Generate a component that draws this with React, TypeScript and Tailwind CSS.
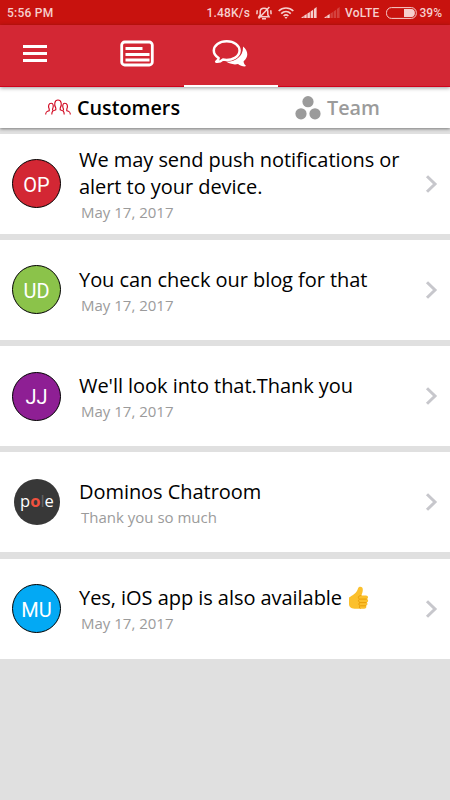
import { ReactNode } from 'react';
import clsx from 'clsx';

type Chat = {
  id: number;
  initials?: string;
  color: string;
  title: ReactNode;
  subtitle: string;
};

const ThumbsUp = () => (
  <svg className="inline-block h-[24px] w-[21px] -mt-[4px] ml-px" viewBox="0 0 21 24" aria-label="thumbs up">
    <path
      d="M1 11.5 C4.5 9.5 8.5 7.5 10 2.6 C10.4 0.2 14.6 0 14.8 3.2 C15 5.6 13.8 7.8 13.4 9.6 H18 C20.6 9.8 20.5 12.6 18.9 13.1 C20.8 13.8 20.4 16.2 18.6 16.6 C20 17.4 19.7 19.4 18 19.8 C19 21 18 22.8 16 22.8 H8 C4 22.8 1 21.5 1 18 Z"
      fill="#fbc02d"
    />
    <path
      d="M13.4 9.6 C11 9.6 9.4 10.8 11 12.8 M18.8 13.1 H12 C10 13.3 10 16 12 16.4 M18.6 16.6 H12 C10.4 16.8 10.5 19.3 12 19.6 M18 19.8 H12.4 C11 20 11 22 12.5 22.5"
      fill="none"
      stroke="#e59600"
      strokeWidth="0.8"
    />
  </svg>
);

const chats: Chat[] = [
  { id: 1, initials: 'OP', color: 'bg-[#d32734]', title: 'We may send push notifications or alert to your device.', subtitle: 'May 17, 2017' },
  { id: 2, initials: 'UD', color: 'bg-[#8bc34a]', title: 'You can check our blog for that', subtitle: 'May 17, 2017' },
  { id: 3, initials: 'JJ', color: 'bg-[#8e1f94]', title: "We'll look into that.Thank you", subtitle: 'May 17, 2017' },
  { id: 4, color: 'bg-[#383838]', title: 'Dominos Chatroom', subtitle: 'Thank you so much' },
  { id: 5, initials: 'MU', color: 'bg-[#03a9f4]', title: <>Yes, iOS app is also available <ThumbsUp /></>, subtitle: 'May 17, 2017' },
];

const StatusBar = () => (
  <div className="flex h-[25px] items-center bg-[#c8120e] pl-[7px] pr-[8px] font-['Roboto',sans-serif] text-[12px] font-medium text-[#f6cfcd]">
    <span className="tracking-[0.25px]">5:56 PM</span>
    <span className="ml-auto tracking-[0.2px]">1.48K/s</span>
    {/* muted bell */}
    <svg className="ml-[6px] h-[14px] w-[16px]" viewBox="0 0 16 14" fill="none" stroke="currentColor" strokeWidth="1.5">
      <path d="M3 10.7 H13 L11.8 8.7 V5.5 C11.8 1 4.2 1 4.2 5.5 V8.7 Z M6 12.8 H10 M2.6 12.6 L13.4 1 M1.2 4.2 L0.9 8.2 M14.8 4.2 L15.1 8.2" />
    </svg>
    {/* wifi */}
    <svg className="ml-[6px] h-[12px] w-[16px]" viewBox="0 0 16 12" fill="none" stroke="currentColor" strokeWidth="1.7">
      <path d="M0.7 4 C4.7 0 11.3 0 15.3 4 M3.2 6.6 C6 4 10 4 12.8 6.6 M5.6 9 C7 7.7 9 7.7 10.4 9" />
      <path d="M6.5 10 H9.5 L8 11.9 Z" fill="currentColor" stroke="none" />
    </svg>
    {/* first sim */}
    <svg className="ml-[7px] h-[11px] w-[16px]" viewBox="0 0 16 11" fill="currentColor">
      <path d="M0 11 L2.7 8.8 V11 Z M3.2 8.6 L5.7 7.1 V11 H3.2 Z M6.4 6.6 L8.9 5 V11 H6.4 Z M9.6 4.5 L12.1 2.7 V11 H9.6 Z M12.9 2 L15.6 0 V11 H12.9 Z" />
    </svg>
    {/* second sim */}
    <svg className="ml-[7px] h-[11px] w-[16px]" viewBox="0 0 16 11" fill="currentColor">
      <path d="M0 11 L2.7 8.8 V11 Z M3.2 8.6 L5.7 7.1 V11 H3.2 Z" />
      <path d="M6.4 6.6 L8.9 5 V11 H6.4 Z M9.6 4.5 L12.1 2.7 V11 H9.6 Z M12.9 2 L15.6 0 V11 H12.9 Z" opacity="0.25" />
    </svg>
    <span className="ml-[5px] tracking-[0.2px]">VoLTE</span>
    <svg className="ml-[6px] h-[12px] w-[31px]" viewBox="0 0 31 12">
      <rect x="0.5" y="0.6" width="29.8" height="10.8" rx="5" fill="none" stroke="currentColor" />
      <path d="M18 2 H25.5 C30 2 30 10 25.5 10 H18 Z" fill="currentColor" />
    </svg>
    <span className="ml-[3px]">39%</span>
  </div>
);

const Header = () => (
  <div className="relative z-20 flex h-[62px] border-b border-[#d0021b] bg-[#d32734] text-white shadow-[0_1px_4px_rgba(0,0,0,0.4)]">
    <button className="flex w-[90px] items-start pl-[23px] pt-[20px]">
      <svg className="h-[17px] w-[24px]" viewBox="0 0 24 17" fill="currentColor">
        <path d="M0 0 H24 V3 H0 Z M0 7 H24 V10 H0 Z M0 14 H24 V17 H0 Z" />
      </svg>
    </button>
    <button className="flex w-[93px] items-start justify-center pt-[15px]">
      <svg className="h-[27px] w-[34px]" viewBox="0 0 34 27">
        <rect x="1.7" y="2" width="30.6" height="23" rx="3" fill="none" stroke="currentColor" strokeWidth="2.8" />
        <path d="M5.5 7 H22.5 V10 H5.5 Z M5.5 13 H29.5 V16 H5.5 Z M5.5 18.5 H29.5 V21.5 H5.5 Z" fill="currentColor" />
      </svg>
    </button>
    <button className="ml-px -mb-px flex h-[62px] w-[94px] items-start justify-center border-b-2 border-white pt-[14px]">
      <svg className="-ml-[2px] h-[29px] w-[36px]" viewBox="0 0 36 29">
        <path d="M31 7.6 C36.8 12.2 36.4 18.6 31.6 22.3 C31.6 24.4 32.8 25.7 34 26.8 C33.4 28.3 28.4 27 26 25.1 C21.6 26 17.2 24.8 14.2 22.6 C24 22.8 31.5 17 31 7.6 Z" fill="currentColor" />
        <path
          d="M14.7 2.2 C7.3 2.2 1.8 6.3 1.8 11.6 C1.8 14.8 3.7 17.4 6.7 19.1 C6.7 20.9 5.2 21.8 4.2 22.7 C6.5 23 9.3 22 10.8 20.6 C20.4 22.1 27.6 17.5 27.6 11.6 C27.6 6.3 22.1 2.2 14.7 2.2 Z"
          fill="none"
          stroke="currentColor"
          strokeWidth="2.5"
          strokeLinejoin="round"
        />
      </svg>
    </button>
  </div>
);

const SubTabs = () => (
  <div className="relative z-10 flex h-[41px] bg-white font-['Open_Sans',sans-serif] text-[19.8px] font-semibold shadow-[0_1px_3px_rgba(0,0,0,0.45)]">
    <button className="flex w-1/2 items-center justify-center gap-[6px] pb-px pt-[2px] text-black">
      <svg className="-mt-[2px] h-[16px] w-[26px]" viewBox="0 0 26 16" fill="none" stroke="#d0021b" strokeWidth="1.1">
        <path d="M6.8 15.5 C6.8 11.8 8.2 11.6 10.8 10.8 V9 C8.8 6 9.5 1 13 1 C16.5 1 17.2 6 15.2 9 V10.8 C17.8 11.6 19.2 11.8 19.2 15.5" />
        <path d="M0.7 15.5 C0.7 12.8 1.5 12.3 4.2 11.8 V10 C2.8 7 3.8 4.3 6.2 4.3 C8.4 4.3 8.8 7 7.6 10 V11.5" />
        <path d="M25.3 15.5 C25.3 12.8 24.5 12.3 21.8 11.8 V10 C23.2 7 22.2 4.3 19.8 4.3 C17.6 4.3 17.2 7 18.4 10 V11.5" />
      </svg>
      Customers
    </button>
    <button className="flex w-1/2 items-center justify-center gap-[6px] pb-px pt-[2px] text-[#9b9b9b]">
      <svg className="-mt-px h-[24px] w-[26px]" viewBox="0 0 26 24" fill="currentColor">
        <circle cx="13" cy="5.7" r="5.6" />
        <circle cx="6" cy="17.8" r="5.6" />
        <circle cx="20" cy="17.8" r="5.6" />
      </svg>
      Team
    </button>
  </div>
);

const Avatar = ({ chat }: { chat: Chat }) => (
  <div
    className={clsx(
      'flex shrink-0 items-center justify-center rounded-full text-white',
      chat.initials
        ? "ml-[12px] mr-[18px] h-[49px] w-[49px] border border-black pt-[2px] font-['Roboto',sans-serif] text-[20px]"
        : "ml-[14px] mr-[19px] h-[46px] w-[46px] font-['Open_Sans',sans-serif] text-[16.5px]",
      chat.color
    )}
  >
    {chat.initials ?? (
      <span className="-mt-[2px]">
        p<b className="text-[#f0513f]">o</b>
        <span className="text-[#666]">l</span>e
      </span>
    )}
  </div>
);

const ChatRow = ({ chat }: { chat: Chat }) => (
  <div className="flex h-[100px] items-center bg-white">
    <Avatar chat={chat} />
    <div className="w-[330px] pt-[3.2px] font-['Open_Sans',sans-serif]">
      <div className="text-[20px] leading-[27px] tracking-[-0.05px] text-black">{chat.title}</div>
      <div className="pl-[2px] text-[15px] leading-[25px] text-[#9b9b9b]">{chat.subtitle}</div>
    </div>
    <svg className="ml-auto mr-[12px] h-[18px] w-[13px]" viewBox="0 0 13 18" fill="none" stroke="#c7c7cc" strokeWidth="3">
      <path d="M2 1.2 L10 9 L2 16.8" />
    </svg>
  </div>
);

export default function App() {
  return (
    <div className="h-[800px] w-[450px] overflow-hidden bg-[#e0e0e0]">
      <StatusBar />
      <Header />
      <SubTabs />
      <div className="flex flex-col gap-[6.25px] pt-[5.7px]">
        {chats.map((chat) => (
          <ChatRow key={chat.id} chat={chat} />
        ))}
      </div>
    </div>
  );
}
